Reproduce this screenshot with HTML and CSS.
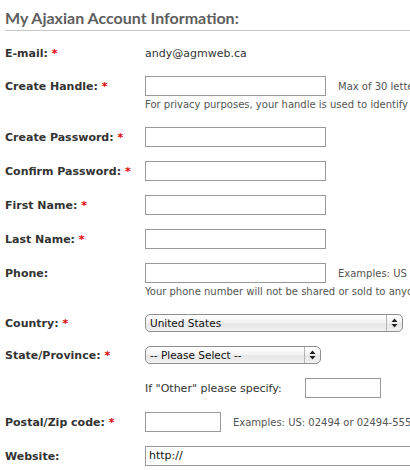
FILE: index.html
```html
<!DOCTYPE html>
<html>
<head>
<meta charset="utf-8">
<link rel="stylesheet" href="styles.css">
</head>
<body>
<div class="page">
  <h2 class="title">My Ajaxian Account Information:</h2>
  <div class="form">
    <div class="row row-email">
      <div class="lbl">E-mail: <span class="req">*</span></div>
      <div class="val">andy@agmweb.ca</div>
    </div>

    <div class="row">
      <div class="lbl">Create Handle: <span class="req">*</span></div>
      <div class="txt w181"></div>
      <span class="note">Max of 30 letters and numbers, no spaces</span>
    </div>
    <div class="hint">For privacy purposes, your handle is used to identify you on the site</div>

    <div class="row">
      <div class="lbl">Create Password: <span class="req">*</span></div>
      <div class="txt w181"></div>
    </div>

    <div class="row">
      <div class="lbl">Confirm Password: <span class="req">*</span></div>
      <div class="txt w181"></div>
    </div>

    <div class="row">
      <div class="lbl">First Name: <span class="req">*</span></div>
      <div class="txt w181"></div>
    </div>

    <div class="row">
      <div class="lbl">Last Name: <span class="req">*</span></div>
      <div class="txt w181"></div>
    </div>

    <div class="row">
      <div class="lbl">Phone:</div>
      <div class="txt w181"></div>
      <span class="note">Examples: US (555) 555-5555</span>
    </div>
    <div class="hint">Your phone number will not be shared or sold to anyone</div>

    <div class="row row-sel">
      <div class="lbl">Country: <span class="req">*</span></div>
      <div class="sel w258">
        <span class="sel-text">United States</span>
        <span class="sel-arrow"><svg width="7" height="10" viewBox="0 0 7 10"><path d="M3.5 0.5 L6.5 4 L0.5 4 Z M0.5 6 L6.5 6 L3.5 9.5 Z" fill="#222"/></svg></span>
      </div>
    </div>

    <div class="row row-sel">
      <div class="lbl">State/Province: <span class="req">*</span></div>
      <div class="sel w176">
        <span class="sel-text">-- Please Select --</span>
        <span class="sel-arrow"><svg width="7" height="10" viewBox="0 0 7 10"><path d="M3.5 0.5 L6.5 4 L0.5 4 Z M0.5 6 L6.5 6 L3.5 9.5 Z" fill="#222"/></svg></span>
      </div>
    </div>

    <div class="row">
      <div class="lbl"></div>
      <span class="val other">If "Other" please specify:</span>
      <div class="txt w76"></div>
    </div>

    <div class="row">
      <div class="lbl">Postal/Zip code: <span class="req">*</span></div>
      <div class="txt w76"></div>
      <span class="note">Examples: US: 02494 or 02494-5555, Canada: M4B 1B3</span>
    </div>

    <div class="row">
      <div class="lbl">Website:</div>
      <div class="txt wfull">http://</div>
    </div>
  </div>
</div>
</body>
</html>
```

FILE: styles.css
```css
html, body {
  margin: 0;
  padding: 0;
  overflow: hidden;
  background: #fff;
}

.page {
  width: 410px;
  padding-left: 5px;
  box-sizing: border-box;
  font-family: "DejaVu Sans", Verdana, sans-serif;
  color: #333;
}

.title {
  margin: 0 -5px 0 0;
  height: 30px;
  border-bottom: 1px solid #c8c8c8;
  font-family: "Lato", "Liberation Sans", sans-serif;
  font-weight: bold;
  font-size: 16px;
  line-height: 36px;
  color: #5e5e5e;
  white-space: nowrap;
  box-sizing: content-box;
  overflow: hidden;
}

.form {
  padding-top: 12px;
}

.row {
  display: flex;
  align-items: center;
  height: 20px;
  margin-bottom: 14px;
  white-space: nowrap;
}

.row-email {
  margin-bottom: 13px;
}

.row-sel {
  height: 18px;
}

.lbl {
  width: 140px;
  flex: none;
  font-weight: bold;
  font-size: 11px;
  color: #333;
}

.req {
  color: #d00;
}

.val {
  font-size: 11px;
  color: #333;
}

.other {
  width: 160px;
  flex: none;
}

.txt {
  height: 20px;
  box-sizing: border-box;
  border: 1px solid #999;
  background: #fff;
  flex: none;
  font-size: 11px;
  color: #111;
  line-height: 18px;
  padding-left: 3px;
}

.w181 { width: 181px; }
.w76 { width: 76px; }
.wfull { width: 280px; }

.note {
  margin-left: 12px;
  font-size: 10px;
  color: #555;
}

.hint {
  margin-top: -14px;
  margin-left: 140px;
  height: 17px;
  line-height: 17px;
  margin-bottom: 14px;
  font-size: 10px;
  color: #555;
  white-space: nowrap;
}

.sel {
  display: flex;
  height: 18px;
  box-sizing: border-box;
  border: 1px solid #8f8f8f;
  border-radius: 5px;
  background: linear-gradient(#ffffff 0%, #f4f4f4 45%, #e6e6e6 55%, #f2f2f2 100%);
  flex: none;
  overflow: hidden;
}

.w258 { width: 258px; }
.w176 { width: 176px; }

.sel-text {
  flex: 1;
  padding-left: 4px;
  font-size: 10.5px;
  line-height: 16px;
  color: #111;
}

.sel-arrow {
  width: 15px;
  flex: none;
  border-left: 1px solid #b5b5b5;
  display: flex;
  align-items: center;
  justify-content: center;
}
```
